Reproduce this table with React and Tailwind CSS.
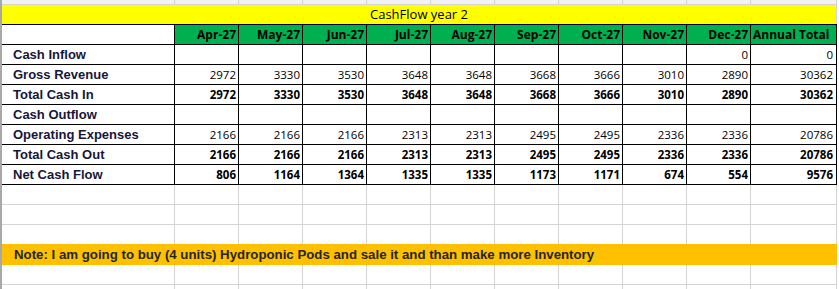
import React from 'react'

const months = ['Apr-27', 'May-27', 'Jun-27', 'Jul-27', 'Aug-27', 'Sep-27', 'Oct-27', 'Nov-27', 'Dec-27']

const rows = [
  { label: 'Cash Inflow', values: ['', '', '', '', '', '', '', '', '0'], total: '0' },
  { label: 'Gross Revenue', values: [2972, 3330, 3530, 3648, 3648, 3668, 3666, 3010, 2890], total: 30362 },
  { label: 'Total Cash In', values: [2972, 3330, 3530, 3648, 3648, 3668, 3666, 3010, 2890], total: 30362, bold: true },
  { label: 'Cash Outflow', values: ['', '', '', '', '', '', '', '', ''], total: '' },
  { label: 'Operating Expenses', values: [2166, 2166, 2166, 2313, 2313, 2495, 2495, 2336, 2336], total: 20786 },
  { label: 'Total Cash Out', values: [2166, 2166, 2166, 2313, 2313, 2495, 2495, 2336, 2336], total: 20786, bold: true },
  { label: 'Net Cash Flow', values: [806, 1164, 1364, 1335, 1335, 1173, 1171, 674, 554], total: 9576, bold: true },
]

const calibri = "font-['Open_Sans',sans-serif]"
const arial = "font-['Liberation_Sans',Arial,sans-serif]"

// empty spreadsheet row with light gridlines
const BlankRow = ({ height = 'h-5', border = true, bg = '' }) => (
  <div className={`flex shrink-0 ${height} ${bg} ${border ? 'border-b border-[#d4d4d4]' : ''}`}>
    <div className="w-[173px] shrink-0 border-r border-[#d4d4d4]" />
    {months.map((m) => (
      <div key={m} className="w-16 shrink-0 border-r border-[#d4d4d4]" />
    ))}
    <div className="w-[86px] shrink-0 border-r border-[#d4d4d4]" />
  </div>
)

const App = () => {
  return (
    <div className="w-[839px] h-[289px] bg-white overflow-hidden flex">
      <div className="w-[2px] shrink-0 bg-[#a8a8a8]" />

      <div className="flex flex-col">
        {/* partial row at the top */}
        <BlankRow height="h-[5px]" bg="bg-[#f2f2f2]" />

        {/* Title */}
        <div className="flex shrink-0 h-5 border-b border-black">
          <div className={`w-[835px] bg-[#ffff00] border-r border-[#d4d4d4] flex items-center justify-center text-[13px] leading-none text-black ${calibri}`}>
            CashFlow year 2
          </div>
        </div>

        {/* Month header */}
        <div className={`flex shrink-0 h-5 border-b border-black text-[12px] font-bold text-black ${calibri}`}>
          <div className="w-[173px] shrink-0 border-r border-black bg-white" />
          {months.map((m) => (
            <div key={m} className="w-16 shrink-0 border-r border-black bg-[#00b050] flex items-center justify-end pr-[2px]">
              {m}
            </div>
          ))}
          <div className="w-[86px] shrink-0 border-r border-black bg-[#00b050] flex items-center pl-[2px] whitespace-nowrap">
            Annual Total
          </div>
        </div>

        {/* Data rows */}
        {rows.map((row) => (
          <div key={row.label} className="flex shrink-0 h-5 border-b border-black">
            <div className={`w-[173px] shrink-0 border-r border-black flex items-center pl-[11px] text-[13px] font-bold text-[#16163a] ${arial}`}>
              {row.label}
            </div>
            {row.values.map((v, i) => (
              <div
                key={i}
                className={`w-16 shrink-0 border-r border-black flex items-center justify-end pr-[2px] text-[11.5px] text-black ${calibri} ${row.bold ? 'font-bold' : ''}`}
              >
                {v}
              </div>
            ))}
            <div className={`w-[86px] shrink-0 border-r border-black flex items-center justify-end pr-[3px] text-[11.5px] text-black ${calibri} ${row.bold ? 'font-bold' : ''}`}>
              {row.total}
            </div>
          </div>
        ))}

        <BlankRow />
        <BlankRow />
        <BlankRow height="h-[19px]" border={false} />

        {/* Note */}
        <div className="flex shrink-0 h-[21px]">
          <div className={`w-[835px] bg-[#ffc000] flex items-center pl-3 text-[13.25px] font-bold text-[#262626] ${arial}`}>
            Note: I am going to buy (4 units) Hydroponic Pods and sale it and than make more Inventory
          </div>
        </div>

        <BlankRow />
        <BlankRow />
      </div>
    </div>
  )
}

export default App
